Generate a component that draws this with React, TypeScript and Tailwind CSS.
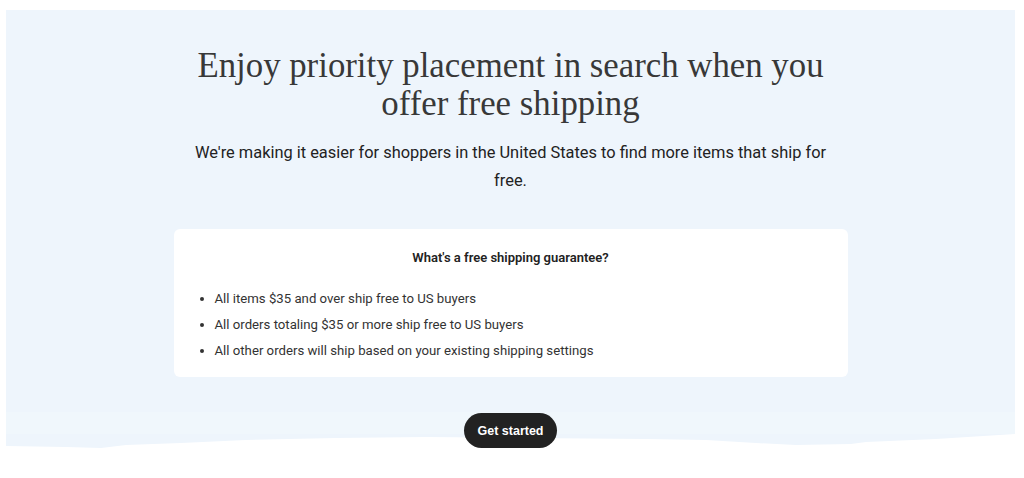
import React from "react";

export default function App() {
  return (
    <div className="w-[1024px] h-[478px] bg-white overflow-hidden pt-[10px]">
      <div className="relative ml-[6px] mr-[9px] h-[438px] bg-[#eef5fc] flex flex-col items-center pt-[37px]">
        <h1
          className="text-center text-[#383838] text-[34.8px] leading-[38px] font-normal"
          style={{ fontFamily: '"Liberation Serif", serif' }}
        >
          Enjoy priority placement in search when you
          <br />
          offer free shipping
        </h1>
        <p
          className="mt-[16px] text-center text-[#222222] text-[16.4px] leading-[28px]"
          style={{ fontFamily: 'Roboto, "Liberation Sans", sans-serif' }}
        >
          We're making it easier for shoppers in the United States to find more items that ship for
          <br />
          free.
        </p>
        <div
          className="mt-[34px] w-[674px] bg-white rounded-[6px] pt-[19px] pb-[13px] pl-[26px] pr-[26px]"
          style={{ fontFamily: 'Roboto, "Liberation Sans", sans-serif' }}
        >
          <div className="text-center text-[13px] leading-[20px] font-semibold text-[#222222]">
            What's a free shipping guarantee?
          </div>
          <ul className="mt-[18px] flex flex-col text-[13.2px] leading-[26px] text-[#333333]">
            {[
              "All items $35 and over ship free to US buyers",
              "All orders totaling $35 or more ship free to US buyers",
              "All other orders will ship based on your existing shipping settings",
            ].map((t) => (
              <li key={t} className="flex items-center">
                <span className="w-[4px] h-[4px] rounded-full bg-[#333333] mr-[11px]" />
                {t}
              </li>
            ))}
          </ul>
        </div>
        <svg
          className="absolute left-0 bottom-0 w-full h-[36px]"
          viewBox="0 0 1009 36"
          preserveAspectRatio="none"
        >
          <rect x="0" y="0" width="1009" height="22" fill="#f0f7fc" />
          <path
            d="M0 34 L60 35 L95 36 L120 33 L175 31 L240 28 L330 26 L420 25 L520 26 L640 27 L700 28 L750 31 L790 33 L845 32 L860 30 L930 27 L1009 22 L1009 36 L0 36 Z"
            fill="#ffffff"
          />
        </svg>
        <button
          className="relative z-10 mt-[36px] w-[93px] h-[36px] pt-[2px] rounded-full bg-[#222222] text-white text-[12.5px] font-bold"
          style={{ fontFamily: '"Liberation Sans", Arial, sans-serif' }}
        >
          Get started
        </button>
      </div>
    </div>
  );
}
